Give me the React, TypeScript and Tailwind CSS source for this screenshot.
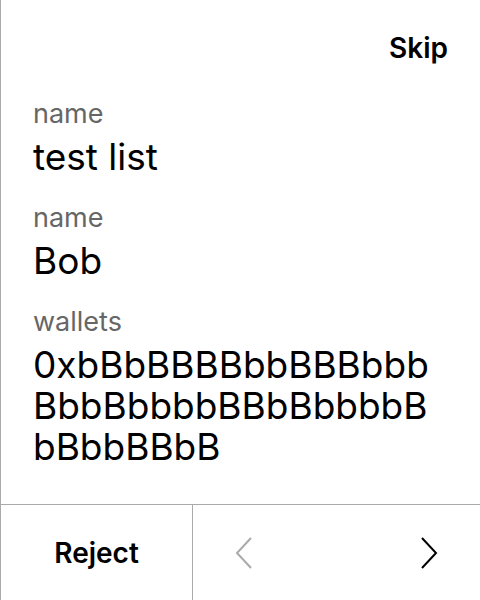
import React from 'react';

const fields = [
  { label: 'name', lines: ['test list'] },
  { label: 'name', lines: ['Bob'] },
  { label: 'wallets', lines: ['0xbBbBBBBbbBBBbbb', 'BbbBbbbbBBbBbbbbB', 'bBbbBBbB'] },
];

const Chevron: React.FC<{ dir: 'left' | 'right'; color: string }> = ({ dir, color }) => (
  <svg width="18" height="34" viewBox="0 0 18 34" fill="none">
    <path
      d={dir === 'left' ? 'M16 2 L2 17 L16 32' : 'M2 2 L16 17 L2 32'}
      stroke={color}
      strokeWidth="2"
    />
  </svg>
);

const App: React.FC = () => {
  return (
    <div
      className="w-[480px] h-[600px] bg-white flex flex-col border-l border-[#aaaaaa] text-black"
      style={{ fontFamily: 'Inter, "Liberation Sans", sans-serif' }}
    >
      <div className="h-[96px] flex items-center justify-end px-8">
        <span className="text-[28px] font-semibold">Skip</span>
      </div>

      <div className="flex-1 flex flex-col gap-[23px] px-8">
        {fields.map((f, i) => (
          <div key={i} className="flex flex-col">
            <span className="text-[27px] leading-9 text-[#666666]">{f.label}</span>
            <div className="mt-1 flex flex-col">
              {f.lines.map((l, j) => (
                <span key={j} className="text-[37px] leading-[41px]">{l}</span>
              ))}
            </div>
          </div>
        ))}
      </div>

      {/* footer actions */}
      <div className="h-24 flex border-t border-[#aaaaaa]">
        <button className="w-[192px] h-full flex items-center justify-center border-r border-[#aaaaaa] text-[28px] font-semibold">
          Reject
        </button>
        <div className="flex-1 flex items-center justify-between pl-[42px] pr-[42px]">
          <Chevron dir="left" color="#aaaaaa" />
          <Chevron dir="right" color="#000000" />
        </div>
      </div>
    </div>
  );
};

export default App;
